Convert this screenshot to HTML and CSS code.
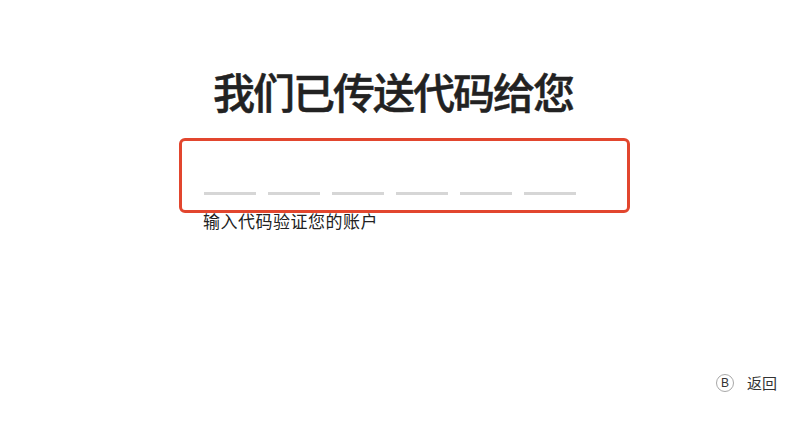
FILE: index.html
```html
<!DOCTYPE html>
<html lang="zh-CN">
<head>
<meta charset="utf-8">
<title>验证</title>
<link rel="stylesheet" href="styles.css">
</head>
<body>
<div class="page">
  <main class="main">
    <h1 class="title">我们已传送代码给您</h1>
    <div class="code-box">
      <span class="slot"></span>
      <span class="slot"></span>
      <span class="slot"></span>
      <span class="slot"></span>
      <span class="slot"></span>
      <span class="slot"></span>
    </div>
    <p class="hint">输入代码验证您的账户</p>
  </main>
  <footer class="footer">
    <span class="key">B</span>
    <span class="back">返回</span>
  </footer>
</div>
</body>
</html>
```

FILE: styles.css
```css
html, body {
  margin: 0;
  padding: 0;
  background: #ffffff;
}
body {
  font-family: "Noto Sans CJK SC", "Noto Sans", "Liberation Sans", sans-serif;
  color: #222222;
}
.page {
  width: 804px;
  height: 426px;
  display: flex;
  flex-direction: column;
  box-sizing: border-box;
}
.main {
  display: flex;
  flex-direction: column;
  align-items: flex-start;
  padding-left: 179px;
  padding-top: 70px;
}
.title {
  margin: 0 0 0 34px;
  font-size: 42px;
  line-height: 42px;
  font-weight: 500;
  color: #222222;
  letter-spacing: -2px;
  -webkit-text-stroke: 0.5px #222222;
}
.code-box {
  margin-top: 26px;
  width: 451px;
  height: 75px;
  box-sizing: border-box;
  border: 3px solid #e2462e;
  border-radius: 6px;
  padding: 51px 0 0 22px;
  display: flex;
  gap: 12px;
}
.slot {
  display: block;
  width: 52px;
  height: 3px;
  background: #d6d6d6;
}
.hint {
  margin: -1px 0 0 24px;
  font-size: 17px;
  line-height: 17px;
  letter-spacing: 0.5px;
  color: #222222;
}
.footer {
  margin-top: auto;
  display: flex;
  justify-content: flex-end;
  align-items: center;
  gap: 13px;
  padding: 0 27px 34px 0;
}
.key {
  width: 18px;
  height: 18px;
  box-sizing: border-box;
  border: 1px solid #a8a8a8;
  border-radius: 50%;
  display: flex;
  align-items: center;
  justify-content: center;
  font-family: "Liberation Sans", sans-serif;
  font-size: 12px;
  color: #333333;
}
.back {
  font-size: 15px;
  line-height: 18px;
  color: #333333;
}
```
